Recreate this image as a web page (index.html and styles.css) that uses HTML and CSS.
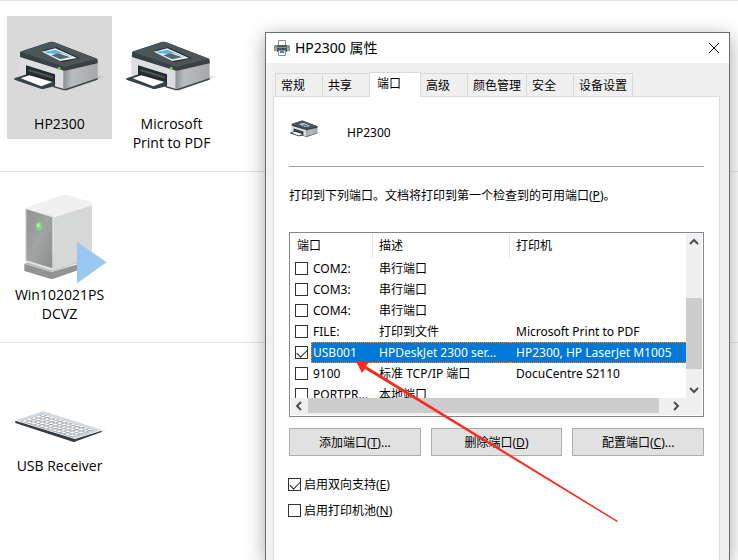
FILE: index.html
```html
<!DOCTYPE html>
<html lang="zh-CN">
<head>
  <meta charset="UTF-8">
  <meta name="viewport" content="width=device-width, initial-scale=1.0">
  <title>HP2300 属性</title>
  <link rel="stylesheet" href="styles.css">
</head>
<body>
  <svg class="defs" aria-hidden="true">
    <defs>
      <linearGradient id="side" x1="0" x2="1"><stop offset="0" stop-color="#8d8f91"/><stop offset=".25" stop-color="#bbbcbe"/><stop offset="1" stop-color="#a5a7a9"/></linearGradient>
      <symbol id="printer" viewBox="6 -51 288 288">
        <path d="M170 160L262 131L286 122L262 116Z" fill="#000" opacity=".08"/>
        <path d="M28 56L160 98V162L130 153L28 118Z" fill="#dddee0"/>
        <path d="M160 98L263 74V127L168 162H160Z" fill="url(#side)"/>
        <path d="M130 149L160 158Q165 160 172 157L263 126V131L172 162Q165 164 158 162L130 154Z" fill="#3f484b"/>
        <path d="M48 88L135 115V150L48 124Z" fill="#252c2f"/>
        <path d="M56 99L128 121V128L56 106Z" fill="#4c5558"/>
        <path d="M13 127L45 116L133 137V151L100 159Q96 160 92 158L13 131Z" fill="#394346"/>
        <path d="M32 127L58 118L127 138L94 151Z" fill="#fff"/>
        <path d="M30 50Q30 47 34 46L119 18Q125 16 131 18L258 67Q263 69 263 73V82L172 103Q165 105 157 103L30 63Z" fill="#384144"/>
        <path d="M32 48L119 18Q125 16 131 18L260 69L171 91Q164 93 156 90Z" fill="#4c5558"/>
        <path d="M99 43L139 34L209 66L155 79Z" fill="#23292c"/>
        <path d="M96 47L136 37L201 66L151 75Z" fill="#eef4f8"/>
        <path d="M103 48L136 41L188 63L151 70Z" fill="#62b1ed"/>
        <path d="M110 53Q128 50 137 55Q149 49 160 53L188 64L151 71Z" fill="#dfeaf0"/>
        <path d="M124 58L145 52L180 64L151 70Z" fill="#53696d"/>
        <circle cx="148" cy="97" r="4" fill="#4be653"/>
      </symbol>
    </defs>
  </svg>

  <main class="devices">
    <section class="group">
      <div class="device selected">
        <svg class="device-icon"><use href="#printer"/></svg>
        <span>HP2300</span>
      </div>
      <div class="device">
        <svg class="device-icon"><use href="#printer"/></svg>
        <span>Microsoft<br>Print to PDF</span>
      </div>
    </section>
    <section class="group">
      <div class="device">
        <svg class="device-icon" viewBox="36 60 288 288">
          <defs>
            <linearGradient id="face" x1="0" y1="0" x2="1" y2="1"><stop offset="0" stop-color="#8f9192"/><stop offset=".5" stop-color="#a2a4a4"/><stop offset="1" stop-color="#8b8d8e"/></linearGradient>
          </defs>
          <path d="M73 281L155 306L276 270V286L165 325Q155 329 145 325L76 304Q73 303 73 300Z" fill="#929494"/>
          <path d="M73 281L155 306L276 265L190 240Z" fill="#b8baba"/>
          <path d="M160 138L276 100V262L160 302Z" fill="#d6d7d7"/>
          <path d="M75 114L188 75Q195 73 202 75L270 96Q276 98 276 106L168 140Q161 142 159 148Z" fill="#f0f0f0"/>
          <path d="M75 114L160 139V302L75 275Z" fill="#e2e3e3"/>
          <path d="M79 118L157 142V295L79 271Z" fill="url(#face)"/>
          <ellipse cx="117" cy="169" rx="9" ry="12" fill="#79dc83"/>
          <ellipse cx="115" cy="166" rx="4" ry="6" fill="#a9f3ab"/>
          <path d="M231 215L320 277L231 340Z" fill="#99c9f2"/>
        </svg>
        <span>Win102021PS<br>DCVZ</span>
      </div>
    </section>
    <section class="group">
      <div class="device">
        <svg class="device-icon" viewBox="0 -132 288 288">
          <path d="M190 108L270 82L284 75L268 72Z" fill="#000" opacity=".06"/>
          <path d="M10 47L189 102L269 77V81L192 109Q187 112 182 110L10 54Z" fill="#333d41"/>
          <path d="M12 46L88 20Q94 18 100 20L268 74L190 101Z" fill="#d3d8dc"/>
          <g transform="matrix(1.28 .39 1.68 -.56 10 47)" fill="none">
            <path d="M10 6H132M10 14H132M10 22H132M10 30H132M10 38H132" stroke="#5b6267" stroke-width="6" stroke-dasharray="8 2"/>
            <path d="M10 7H132M10 15H132M10 23H132M10 31H132M10 39H132" stroke="#fff" stroke-width="6" stroke-dasharray="7 3"/>
          </g>
        </svg>
        <span>USB Receiver</span>
      </div>
    </section>
  </main>

  <div class="dialog" role="dialog" aria-labelledby="title">
    <header class="titlebar">
      <svg width="16" height="16" viewBox="0 0 16 16">
        <path d="M4.5 6V.5h7V6" fill="#fff" stroke="#8a8e90"/>
        <path d="M1 5h14l1 1v5H0V6z" fill="#8b9092"/>
        <path d="M3 5h10v2H3z" fill="#555c5f"/>
        <path d="M1 8h14v2H1z" fill="#a9adaf"/>
        <path d="M3 8h10v4H3z" fill="#4f5659"/>
        <path d="M4.5 10.5h7v5h-7z" fill="#fff" stroke="#8a8e90"/>
        <path d="M6 11h4v2H6z" fill="#2d8bd8"/>
        <path d="M13 6h1v1h-1z" fill="#6fe36f"/>
      </svg>
      <h1 id="title">HP2300 属性</h1>
      <button class="close" aria-label="关闭">
        <svg width="12" height="12" viewBox="0 0 12 12"><path d="M1 1l10 10M11 1L1 11" stroke="#000"/></svg>
      </button>
    </header>

    <div class="tabs" role="tablist">
      <button class="tab" role="tab">常规</button>
      <button class="tab" role="tab">共享</button>
      <button class="tab active" role="tab" aria-selected="true">端口</button>
      <button class="tab" role="tab">高级</button>
      <button class="tab" role="tab">颜色管理</button>
      <button class="tab" role="tab">安全</button>
      <button class="tab" role="tab">设备设置</button>
    </div>

    <div class="panel" role="tabpanel">
      <div class="printer-name">
        <svg class="small-icon"><use href="#printer"/></svg>
        <span>HP2300</span>
      </div>
      <p class="hint">打印到下列端口。文档将打印到第一个检查到的可用端口(<u>P</u>)。</p>

      <div class="port-list">
        <div class="viewport">
          <table>
            <colgroup><col class="c-check"><col class="c-port"><col class="c-desc"><col></colgroup>
            <thead>
              <tr><th colspan="2">端口</th><th>描述</th><th>打印机</th></tr>
            </thead>
            <tbody>
              <tr><td><input type="checkbox" id="com2"></td><td><label for="com2">COM2:</label></td><td>串行端口</td><td></td></tr>
              <tr><td><input type="checkbox" id="com3"></td><td><label for="com3">COM3:</label></td><td>串行端口</td><td></td></tr>
              <tr><td><input type="checkbox" id="com4"></td><td><label for="com4">COM4:</label></td><td>串行端口</td><td></td></tr>
              <tr><td><input type="checkbox" id="file"></td><td><label for="file">FILE:</label></td><td>打印到文件</td><td>Microsoft Print to PDF</td></tr>
              <tr class="current"><td><input type="checkbox" id="usb001" checked></td><td><label for="usb001">USB001</label></td><td>HPDeskJet 2300 ser...</td><td>HP2300, HP LaserJet M1005</td></tr>
              <tr><td><input type="checkbox" id="p9100"></td><td><label for="p9100">9100</label></td><td>标准 TCP/IP 端口</td><td>DocuCentre S2110</td></tr>
              <tr><td><input type="checkbox" id="portpr"></td><td><label for="portpr">PORTPR...</label></td><td>本地端口</td><td></td></tr>
            </tbody>
          </table>
        </div>
        <div class="vscroll">
          <svg width="16" height="16" viewBox="0 0 16 16"><path d="M4 10l4-4 4 4" class="chev"/></svg>
          <div class="thumb"></div>
          <svg width="16" height="16" viewBox="0 0 16 16"><path d="M4 6l4 4 4-4" class="chev"/></svg>
        </div>
        <div class="hscroll">
          <svg width="16" height="16" viewBox="0 0 16 16"><path d="M10 4L6 8l4 4" class="chev"/></svg>
          <div class="thumb"></div>
          <svg width="16" height="16" viewBox="0 0 16 16"><path d="M6 4l4 4-4 4" class="chev"/></svg>
        </div>
      </div>

      <div class="actions">
        <button>添加端口(<u>T</u>)...</button>
        <button>删除端口(<u>D</u>)</button>
        <button>配置端口(<u>C</u>)...</button>
      </div>

      <label class="option"><input type="checkbox" checked>启用双向支持(<u>E</u>)</label>
      <label class="option"><input type="checkbox">启用打印机池(<u>N</u>)</label>
    </div>
  </div>

  <!-- red arrow pointing at the USB001 row -->
  <svg class="arrow" width="264" height="162" viewBox="0 0 264 162" aria-hidden="true">
    <path d="M0 0L13 1L10 5L262 160L261 161L9 8L6 12Z" fill="#fb2a1c"/>
  </svg>
</body>
</html>
```

FILE: styles.css
```css
* {
  box-sizing: border-box;
}
body {
  position: relative;
  margin: 0;
  height: 100vh;
  overflow: hidden;
  background-color: #fff;
  color: #000;
  font-family: "Noto Sans", "Noto Sans CJK SC", sans-serif;
  font-size: 12px;
}
button {
  font: inherit;
  color: inherit;
}
.defs {
  position: absolute;
  width: 0;
  height: 0;
}

/* device list */
.group {
  display: flex;
  gap: 7px;
  height: 171px;
  padding: 15px 7px 0;
  border-top: 1px solid #e5e5e5;
}
.device {
  display: flex;
  flex-direction: column;
  align-items: center;
  align-self: flex-start;
  width: 105px;
  padding: 3px 0 6px;
  font-family: "Open Sans", sans-serif;
  font-size: 14px;
  line-height: 19px;
  text-align: center;
}
.device.selected {
  background-color: #d9d9d9;
}
.device-icon {
  width: 96px;
  height: 96px;
  margin-bottom: -1px;
}

/* properties window */
.dialog {
  position: absolute;
  top: 32px;
  left: 265px;
  right: 8px;
  bottom: 0;
  display: flex;
  flex-direction: column;
  border: 1px solid #6b6b6b;
  border-bottom: none;
  background-color: #f0f0f0;
  box-shadow: 0 4px 18px rgba(0, 0, 0, 0.35);
}
.titlebar {
  display: flex;
  align-items: center;
  gap: 5px;
  height: 30px;
  padding: 0 8px;
  background-color: #fff;
}
.titlebar h1 {
  flex: 1;
  margin: 0;
  font-size: 14px;
  line-height: 20px;
  font-weight: 400;
}
.close {
  display: flex;
  padding: 1px;
  border: none;
  background: none;
}
.tabs {
  display: flex;
  align-items: flex-end;
  height: 33px;
  padding-left: 9px;
}
.tab {
  min-width: 48px;
  height: 23px;
  margin-right: -1px;
  padding: 2px 5px 0;
  border: 1px solid #d9d9d9;
  border-bottom: none;
  background-color: #f0f0f0;
  line-height: 20px;
  text-align: left;
}
.tab.active {
  z-index: 1;
  min-width: 52px;
  height: 25px;
  margin-bottom: -1px;
  padding: 0 7px 2px;
  background-color: #fff;
}
.panel {
  flex: 1;
  margin: 0 9px 0 7px;
  padding: 16px 15px 0;
  border: 1px solid #dcdcdc;
  border-bottom: none;
  background-color: #fff;
}
.printer-name {
  display: flex;
  align-items: center;
  gap: 26px;
  height: 54px;
  padding-bottom: 14px;
  border-bottom: 1px solid #a0a0a0;
}
.small-icon {
  align-self: flex-start;
  width: 32px;
  height: 32px;
}
.hint {
  margin: 19px 0 26px;
  line-height: 20px;
}

/* port list */
.port-list {
  display: grid;
  grid-template-columns: 1fr 16px;
  grid-template-rows: 164px 17px;
  padding: 1px;
  border: 1px solid #828790;
}
.viewport {
  overflow: hidden;
}
table {
  width: 100%;
  table-layout: fixed;
  border-spacing: 0;
}
.c-check {
  width: 20px;
}
.c-port {
  width: 62px;
}
.c-desc {
  width: 137px;
}
th {
  height: 24px;
  padding: 0 6px 2px;
  border-right: 1px solid #e5e5e5;
  font-weight: 400;
  text-align: left;
}
th:last-child {
  border-right: none;
}
td {
  height: 21px;
  padding: 0 0 0 6px;
  line-height: 18px;
  white-space: nowrap;
}
td:first-child {
  padding-left: 4px;
}
td:nth-child(2) {
  padding-left: 2px;
}
.current td:not(:first-child) {
  background-color: #0078d7;
  color: #fff;
  border-top: 1px dotted #ff8728;
  border-bottom: 1px dotted #ff8728;
}
.current td:nth-child(2) {
  padding-left: 1px;
  border-left: 1px dotted #ff8728;
}
input[type="checkbox"] {
  appearance: none;
  display: block;
  flex: none;
  width: 13px;
  height: 13px;
  margin: 0;
  border: 1px solid #333;
  background-color: #fff;
}
input[type="checkbox"]:checked::before {
  content: "";
  display: block;
  width: 9px;
  height: 5px;
  margin: 2px 1px;
  border-left: 1px solid #222;
  border-bottom: 1px solid #222;
  transform: rotate(-45deg);
}
.vscroll,
.hscroll {
  display: flex;
  background-color: #f0f0f0;
}
.vscroll {
  flex-direction: column;
}
.hscroll {
  grid-column: 1 / 3;
  padding-right: 18px;
}
.thumb {
  background-color: #cdcdcd;
}
.vscroll .thumb {
  height: 71px;
  margin: auto 0 13px;
}
.hscroll .thumb {
  flex: 1;
  height: 15px;
  margin: 0 9px 0 1px;
}
.chev {
  fill: none;
  stroke: #505050;
  stroke-width: 2;
}

.actions {
  display: grid;
  grid-template-columns: repeat(3, 1fr);
  gap: 10px;
  margin: 11px 0 18px;
}
.actions button {
  height: 28px;
  padding: 0;
  border: 1px solid #adadad;
  background-color: #e1e1e1;
}
.option {
  display: flex;
  align-items: center;
  height: 20px;
  margin: 0 0 6px -1px;
}
.option input {
  margin-right: 3px;
}

.arrow {
  position: absolute;
  left: 356px;
  top: 361px;
}
```
